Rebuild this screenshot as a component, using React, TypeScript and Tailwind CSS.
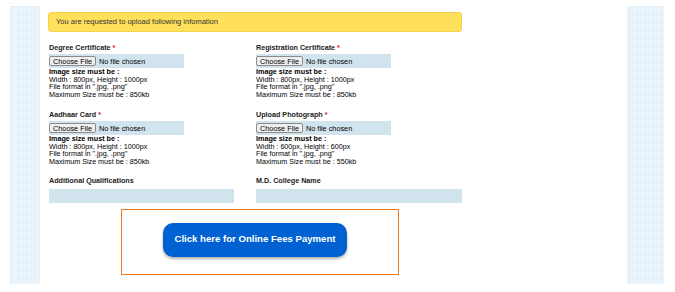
import React from "react";

function GridPanel({ w }: { w: string }) {
  return (
    <div
      className={`${w} h-full bg-[#eaf5fd] bg-[linear-gradient(#e0eef8_1px,transparent_1px),linear-gradient(90deg,#e0eef8_1px,transparent_1px)] bg-[size:8px_8px]`}
    />
  );
}

function FileInput() {
  return (
    <div className="w-[135px] h-[14px] bg-[#d1e4ee] flex items-center">
      <span className="h-[10px] w-[47px] border border-[#8a8a8a] bg-[#efefef] rounded-[2px] flex items-center justify-center text-[7.3px] leading-none text-black">
        Choose File
      </span>
      <span className="ml-[3px] text-[7.3px] leading-none text-black">No file chosen</span>
    </div>
  );
}

function UploadField({
  label,
  w,
  h,
  size,
}: {
  label: string;
  w: string;
  h: string;
  size: string;
}) {
  return (
    <div className="flex flex-col">
      <div className="h-[8px] text-[7.2px] leading-[8px] font-bold text-[#222]">
        {label} <span className="text-red-600">*</span>
      </div>
      <div className="mt-[2.6px]">
        <FileInput />
      </div>
      <div className="text-[7.2px] leading-[7.5px] text-black">
        <div className="font-bold">Image size must be :</div>
        <div>
          Width : {w}, Height : {h}
        </div>
        <div>File format in ".jpg, .png"</div>
        <div>Maximum Size must be : {size}</div>
      </div>
    </div>
  );
}

export default function App() {
  return (
    <div
      className="w-[675px] h-[292px] bg-white flex pt-[6px] pb-[8px] pl-[10px] pr-[11px]"
      style={{ fontFamily: '"Liberation Sans", Arial, sans-serif' }}
    >
      <GridPanel w="w-[27px]" />
      <div className="w-[3px] h-full bg-[#f1f1f1]" />
      <div className="flex-1 h-full bg-white pl-[8px] pt-[6px]">
        <div className="w-[414px] h-[20px] bg-[#ffe05b] border border-[#f2d24e] rounded-[3px] flex items-center pl-[7px] text-[7.5px] text-[#333]">
          You are requested to upload following infomation
        </div>
        <div className="ml-[1px] mt-[11.7px] grid grid-cols-[207px_207px]">
          <UploadField label="Degree Certificate" w="800px" h="1000px" size="850kb" />
          <UploadField label="Registration Certificate" w="800px" h="1000px" size="850kb" />
        </div>
        <div className="ml-[1px] mt-[12.5px] grid grid-cols-[207px_207px]">
          <UploadField label="Aadhaar Card" w="800px" h="1000px" size="850kb" />
          <UploadField label="Upload Photograph" w="600px" h="600px" size="550kb" />
        </div>
        <div className="ml-[1px] mt-[12px] grid grid-cols-[207px_207px]">
          <div className="flex flex-col">
            <div className="h-[8px] text-[7.2px] leading-[8px] font-bold text-[#222]">
              Additional Qualifications
            </div>
            <div className="mt-[3.3px] w-[185px] h-[14px] bg-[#d1e4ee]" />
          </div>
          <div className="flex flex-col">
            <div className="h-[8px] text-[7.2px] leading-[8px] font-bold text-[#222]">
              M.D. College Name
            </div>
            <div className="mt-[3.3px] w-[206px] h-[14px] bg-[#d1e4ee]" />
          </div>
        </div>
        <div className="ml-[73px] mt-[6.3px] w-[278px] h-[66px] border border-[#f07a22] pl-[41px] pt-[12.7px]">
          <button className="w-[184px] h-[34px] rounded-[10px] bg-[#0062d2] text-white text-[9.6px] font-bold shadow-[0_2px_3px_rgba(0,0,0,0.3)] flex items-center justify-center">
            Click here for Online Fees Payment
          </button>
        </div>
      </div>
      <div className="w-[2px] h-full bg-[#f1f1f1]" />
      <GridPanel w="w-[35px]" />
    </div>
  );
}
